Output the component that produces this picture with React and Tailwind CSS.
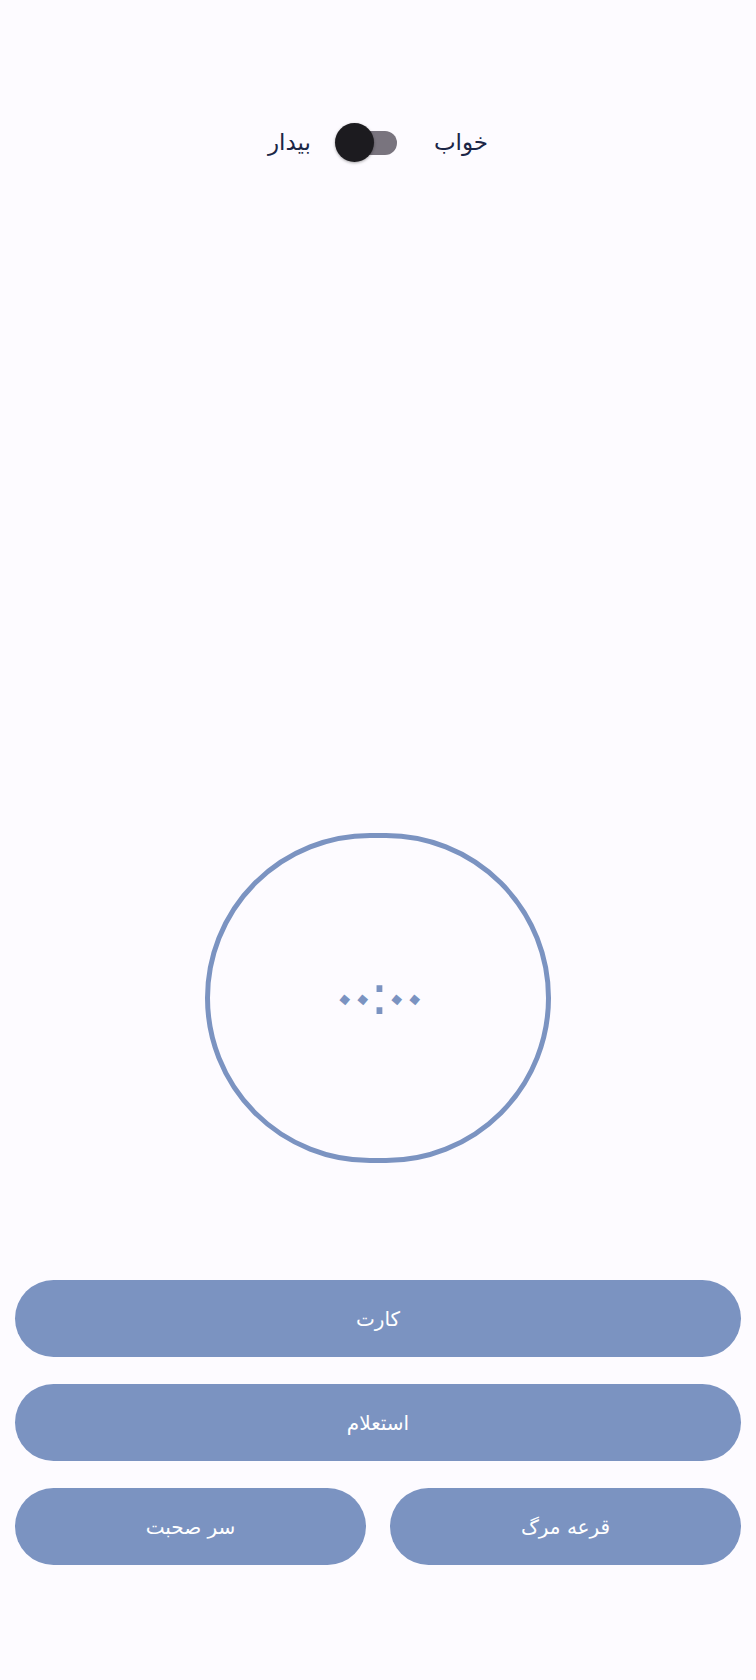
const persian = { fontFamily: '"DejaVu Sans", "Noto Sans", sans-serif' };

const Switch = () => (
  <div className="relative w-[62px] h-[39px]">
    <div className="absolute right-0 top-[8px] w-[52px] h-[24px] rounded-full bg-[#79747e]" />
    <div className="absolute left-0 top-0 w-[39px] h-[39px] rounded-full bg-[#1c1b1f] shadow-[0_1px_3px_rgba(0,0,0,0.35)]" />
  </div>
);

const PillButton = ({ label, className = '' }) => (
  <button
    className={`h-[77px] rounded-full bg-[#7b93c1] text-white text-[20px] flex items-center justify-center ${className}`}
    style={persian}
  >
    <span dir="rtl">{label}</span>
  </button>
);

// timer text, each char in a fixed cell so the dots sit close like the original
const Timer = ({ value }) => (
  <div className="flex items-center leading-none text-[#7b93c1] -mt-[6px]">
    {value.split('').map((c, i) =>
      c === ':' ? (
        <span key={i} className="inline-block w-[16px] text-center text-[56px] font-normal">{c}</span>
      ) : (
        <span key={i} className="inline-block w-[18px] text-center text-[44px] font-bold rotate-[40deg]">{c}</span>
      )
    )}
  </div>
);

export default function App() {
  return (
    <div className="min-h-[1680px] w-full bg-[#fdfbff] flex flex-col" style={persian}>
      <div className="pt-[123px] flex items-center justify-center">
        <span dir="rtl" className="text-[23px] text-[#1b2646] leading-none">بیدار</span>
        <div className="ml-[24px] mr-[37px]">
          <Switch />
        </div>
        <span dir="rtl" className="text-[23px] text-[#1b2646] leading-none">خواب</span>
      </div>

      <div className="mt-[671px] mx-auto w-[346px] h-[330px] rounded-full border-[5px] border-[#7b93c1] flex items-center justify-center">
        <Timer value="۰۰:۰۰" />
      </div>

      <div className="mt-[117px] px-[15px] flex flex-col gap-[27px]">
        <PillButton label="کارت" className="w-full" />
        <PillButton label="استعلام" className="w-full" />
        <div dir="rtl" className="flex gap-[24px]">
          <PillButton label="قرعه مرگ" className="flex-1" />
          <PillButton label="سر صحبت" className="flex-1" />
        </div>
      </div>
    </div>
  );
}
